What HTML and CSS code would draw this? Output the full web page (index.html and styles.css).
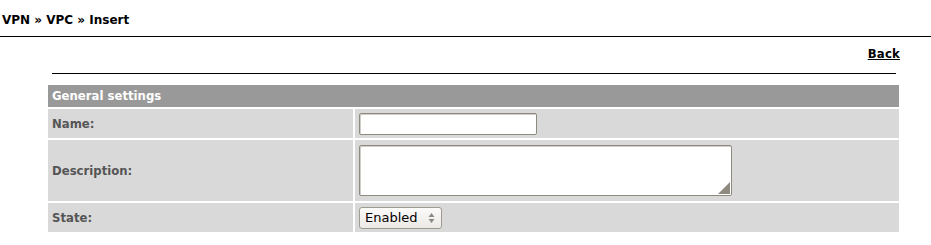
FILE: index.html
```html
<!DOCTYPE html>
<html>
<head>
<meta charset="utf-8">
<link rel="stylesheet" href="styles.css">
</head>
<body>
<div class="crumb">VPN &raquo; VPC &raquo; Insert</div>
<div class="content">
  <div class="back-row"><a href="#" class="back">Back</a></div>
  <div class="sep"></div>
  <div class="form">
    <div class="head">General settings</div>
    <div class="label row-name">Name:</div>
    <div class="field row-name"><input type="text" class="txt"></div>
    <div class="label row-desc">Description:</div>
    <div class="field row-desc">
      <span class="area-wrap">
        <textarea class="area"></textarea>
        <svg class="grip" width="12" height="12" viewBox="0 0 12 12"><path d="M12 0 L12 12 L0 12 Z" fill="#8f8a80"/></svg>
      </span>
    </div>
    <div class="label row-state">State:</div>
    <div class="field row-state">
      <span class="sel-wrap">
        <select class="sel"><option>Enabled</option><option>Disabled</option></select>
        <svg class="arrows" width="7" height="12" viewBox="0 0 7 12"><path d="M3.5 1 L6.5 5 L0.5 5 Z M0.5 7 L6.5 7 L3.5 11 Z" fill="#8a8a8a"/></svg>
      </span>
    </div>
  </div>
</div>
</body>
</html>
```
FILE: styles.css
```css
html, body {
  margin: 0;
  padding: 0;
  background: #fff;
  font-family: "DejaVu Sans", Verdana, sans-serif;
  font-size: 11.7px;
  color: #000;
}
.crumb {
  font-weight: bold;
  font-size: 12px;
  line-height: 14px;
  padding: 13px 2px 0;
  height: 23px;
  border-bottom: 1px solid #000;
}
.content {
  width: 851px;
  margin-left: 48px;
}
.back-row {
  display: flex;
  justify-content: flex-end;
  padding-top: 10px;
  height: 26px;
  line-height: 14px;
}
.back {
  color: #000;
  font-weight: bold;
  text-decoration: underline;
  letter-spacing: 0.2px;
  margin-right: -1px;
}
.sep {
  margin: 0 3px 0 4px;
  border-top: 1px solid #000;
  height: 0;
}
.form {
  margin-top: 11px;
  display: grid;
  grid-template-columns: 305px 1fr;
  gap: 2px 2px;
}
.head {
  grid-column: 1 / 3;
  background: #999;
  color: #fff;
  font-weight: bold;
  height: 22px;
  line-height: 22px;
  padding-left: 4px;
}
.label {
  background: #d9d9d9;
  color: #555;
  font-weight: bold;
  padding-left: 4px;
  display: flex;
  align-items: center;
}
.field {
  background: #d9d9d9;
  display: flex;
  align-items: center;
  padding-left: 4px;
}
.row-name { height: 29px; }
.row-desc { height: 61px; }
.row-state { height: 29px; }
.txt {
  box-sizing: border-box;
  width: 178px;
  height: 22px;
  margin: 0;
  border: 1px solid #8f8a80;
  border-radius: 2px;
  background: #fff;
  box-shadow: inset 1px 1px 0 #d0ccc6;
}
.area-wrap {
  position: relative;
  display: inline-block;
  height: 51px;
}
.area {
  display: block;
  box-sizing: border-box;
  width: 373px;
  height: 51px;
  margin: 0;
  border: 1px solid #8f8a80;
  border-radius: 2px;
  background: #fff;
  box-shadow: inset 1px 1px 0 #d0ccc6;
  resize: none;
}
.grip {
  position: absolute;
  right: 2px;
  bottom: 2px;
  pointer-events: none;
}
.sel-wrap {
  position: relative;
  display: inline-block;
  height: 22px;
}
.sel {
  -webkit-appearance: none;
  appearance: none;
  box-sizing: border-box;
  width: 83px;
  height: 22px;
  margin: 0;
  padding: 0 0 0 5px;
  border: 1px solid #a09b92;
  border-radius: 3px;
  background: linear-gradient(#fbfbfa, #ece9e5);
  font-family: "DejaVu Sans", sans-serif;
  font-size: 13px;
  color: #000;
}
.arrows {
  position: absolute;
  right: 7px;
  top: 5px;
  pointer-events: none;
}
```
